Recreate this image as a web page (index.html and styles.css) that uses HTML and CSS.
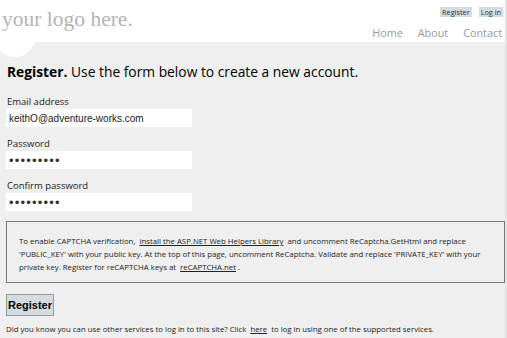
FILE: index.html
```html
<!DOCTYPE html>
<html>
<head>
<meta charset="utf-8">
<link rel="stylesheet" href="styles.css">
</head>
<body>
<header class="header">
  <div class="blob"></div>
  <div class="logo">your logo here.</div>
  <div class="header-right">
    <div class="account">
      <a class="mini-btn" href="#">Register</a>
      <a class="mini-btn" href="#">Log in</a>
    </div>
    <nav class="nav">
      <a href="#">Home</a>
      <a href="#">About</a>
      <a href="#">Contact</a>
    </nav>
  </div>
</header>
<main class="main">
  <h1 class="title"><b>Register.</b> Use the form below to create a new account.</h1>
  <form class="form">
    <label class="field">
      <span class="label">Email address</span>
      <input class="input" type="text" value="keithO@adventure-works.com">
    </label>
    <label class="field">
      <span class="label">Password</span>
      <input class="input pw" type="password" value="password1">
    </label>
    <label class="field">
      <span class="label">Confirm password</span>
      <input class="input pw" type="password" value="password1">
    </label>
    <div class="captcha">
      To enable CAPTCHA verification, <a href="#">install the ASP.NET Web Helpers Library</a> and uncomment ReCaptcha.GetHtml and replace 'PUBLIC_KEY' with your public key. At the top of this page, uncomment ReCaptcha. Validate and replace 'PRIVATE_KEY' with your private key. Register for reCAPTCHA keys at <a href="#">reCAPTCHA.net</a>.
    </div>
    <button class="submit" type="button">Register</button>
  </form>
  <p class="note">Did you know you can use other services to log in to this site? Click <a href="#">here</a> to log in using one of the supported services.</p>
</main>
</body>
</html>
```
FILE: styles.css
```css
html, body {
  margin: 0;
  padding: 0;
}
body {
  background: #efefef;
  font-family: "Open Sans", "Noto Sans", sans-serif;
  color: #222;
  width: 505px;
  height: 338px;
  overflow: hidden;
  border-right: 2px solid #e3e3e3;
}
.header {
  position: relative;
  height: 42px;
  background: #fff;
  display: flex;
  justify-content: space-between;
}
.logo {
  position: relative;
  font-family: "Liberation Serif", serif;
  font-size: 21.5px;
  color: #b4b4b4;
  padding: 7px 0 0 2px;
  line-height: 24px;
}
.blob {
  position: absolute;
  left: -5px;
  top: 17px;
  width: 40px;
  height: 40px;
  border-radius: 50%;
  background: #fff;
}
.header-right {
  display: flex;
  flex-direction: column;
  align-items: flex-end;
  padding: 7px 3px 0 0;
}
.account {
  display: flex;
  gap: 7px;
  margin-right: -1px;
}
.mini-btn {
  font-size: 7.3px;
  line-height: 10px;
  padding: 0 2px;
  background: #d3dce0;
  color: #333;
  text-decoration: none;
}
.nav {
  display: flex;
  gap: 15px;
  margin-top: 9px;
}
.nav a {
  font-size: 10.8px;
  line-height: 14px;
  color: #999;
  text-decoration: none;
}
.main {
  padding: 0 0 0 6px;
}
.title {
  margin: 20px 0 0 1px;
  font-size: 13.8px;
  line-height: 20px;
  font-weight: normal;
  color: #000;
}
.title b {
  font-weight: bold;
}
.form {
  margin-top: 13px;
}
.field {
  display: flex;
  flex-direction: column;
  margin-bottom: 10px;
}
.label {
  font-size: 9.5px;
  line-height: 13px;
  color: #222;
  margin: 0 0 1px 1px;
}
.input {
  width: 186px;
  height: 18px;
  box-sizing: border-box;
  border: none;
  background: #fff;
  padding: 0 3px;
  font-family: "Liberation Sans", Arial, sans-serif;
  font-size: 10px;
  color: #222;
  margin: 0;
}
.input.pw {
  font-size: 13px;
  letter-spacing: 1.2px;
  color: #333;
}
.captcha {
  margin-top: 0;
  width: 499px;
  box-sizing: border-box;
  border: 1px solid #777;
  padding: 13px 10px 8px 12px;
  font-size: 7.8px;
  line-height: 13px;
  color: #222;
}
.captcha a, .note a {
  color: #222;
  margin: 0 2px;
}
.submit {
  display: block;
  margin-top: 11px;
  width: 48px;
  height: 22px;
  background: #d3dce0;
  border: 1px solid #999;
  font-family: "Liberation Sans", Arial, sans-serif;
  font-weight: bold;
  font-size: 11px;
  color: #000;
  padding: 0;
}
.note {
  margin: 7px 0 0 0;
  font-size: 7.8px;
  line-height: 12px;
  color: #222;
}
```
